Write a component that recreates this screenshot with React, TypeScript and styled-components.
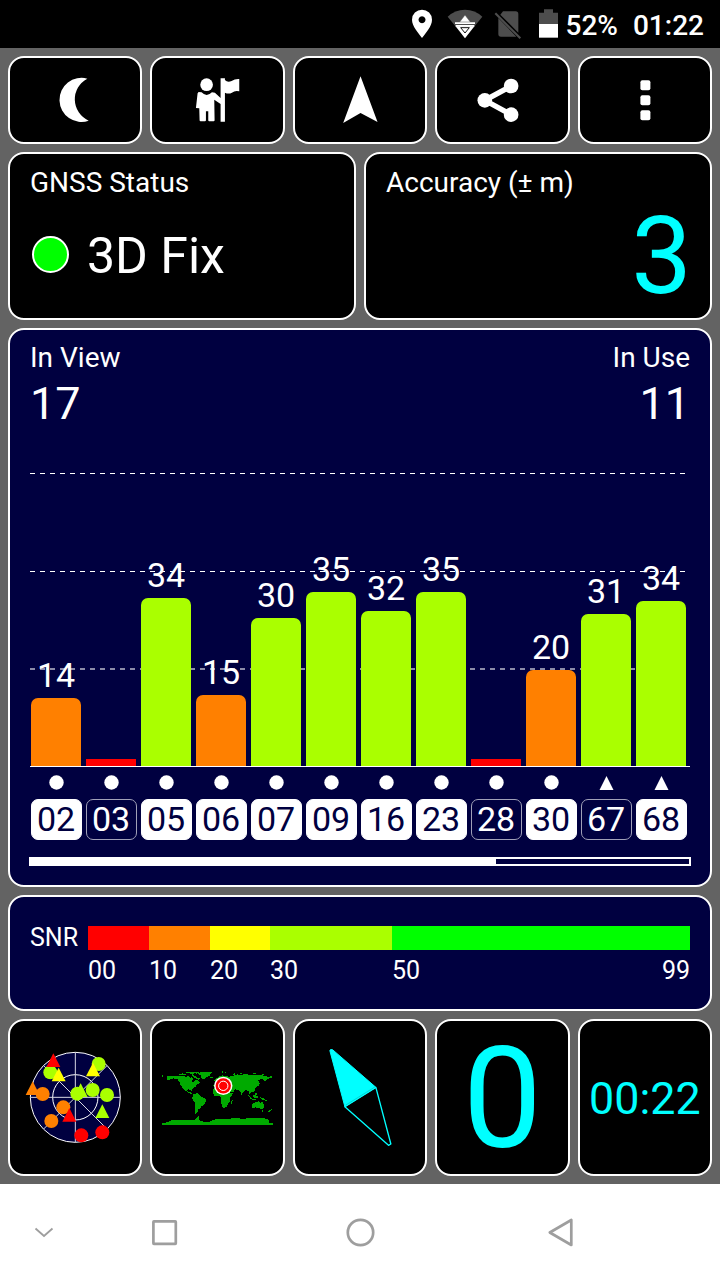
import React from 'react';
import styled, { createGlobalStyle } from 'styled-components';

const NAVY = '#000040';
const CYAN = '#00ffff';
const RED = '#ff0000';
const ORANGE = '#ff8000';
const YELLOW = '#ffff00';
const LIME = '#aaff00';
const GREEN = '#00ff00';

const GlobalStyle = createGlobalStyle`
  * { box-sizing: border-box; }
  body { margin: 0; background: #636363; }
`;

const Screen = styled.div`
  display: flex;
  flex-direction: column;
  width: 720px;
  height: 1280px;
  overflow: hidden;
  background: #636363;
  color: #fff;
  font-family: Roboto, 'Liberation Sans', sans-serif;
  svg { display: block; flex: none; }
`;

const StatusBar = styled.header`
  display: flex;
  justify-content: flex-end;
  align-items: center;
  height: 48px;
  padding-right: 16px;
  background: #000;
`;

const StatusText = styled.span<{ $gap?: number }>`
  margin-left: ${p => p.$gap ?? 0}px;
  padding-top: 3px;
  font-size: 28px;
  font-weight: 500;
  line-height: 48px;
  white-space: nowrap;
`;

const Main = styled.main`
  display: flex;
  flex-direction: column;
  gap: 8px;
  height: 1136px;
  padding: 8px;
`;

const Row = styled.div<{ $height: number }>`
  display: flex;
  gap: 8px;
  height: ${p => p.$height}px;
`;

const Card = styled.section<{ $navy?: boolean }>`
  flex: 1 1 0;
  min-width: 0;
  border: 2px solid #fff;
  border-radius: 16px;
  background: ${p => (p.$navy ? NAVY : '#000')};
`;

const Tile = styled.button`
  display: flex;
  flex: 1 1 0;
  min-width: 0;
  align-items: center;
  justify-content: center;
  padding: 0;
  border: 2px solid #fff;
  border-radius: 16px;
  background: #000;
`;

const TileValue = styled.span<{ $size: number; $drop: number }>`
  padding-top: ${p => p.$drop}px;
  color: ${CYAN};
  font-family: Roboto, 'Liberation Sans', sans-serif;
  font-size: ${p => p.$size}px;
  line-height: 150px;
`;

const FieldCard = styled(Card)`
  padding: 14px 20px 0;
`;

const Label = styled.div`
  font-size: 28px;
  line-height: 30px;
`;

const FixRow = styled.div`
  display: flex;
  align-items: center;
  height: 115px;
  gap: 18px;
  padding-left: 2px;
  font-size: 50px;
  line-height: 60px;
`;

const FixDot = styled.i`
  width: 37px;
  height: 37px;
  margin-top: -3px;
  border: 2px solid #fff;
  border-radius: 50%;
  background: ${GREEN};
`;

const BigValue = styled.div`
  margin-right: -2px;
  color: ${CYAN};
  font-size: 108px;
  line-height: 116px;
  text-align: right;
`;

const ChartCard = styled(Card)`
  flex: none;
  height: 559px;
  padding: 13px 20px 0;
`;

const Between = styled.div`
  display: flex;
  justify-content: space-between;
`;

const Count = styled.div`
  font-size: 45px;
  line-height: 61px;
`;

const Plot = styled.div`
  position: relative;
  display: flex;
  align-items: flex-end;
  gap: 5px;
  height: 333px;
  padding-left: 1px;
  border-bottom: 1px solid #fff;
`;

const GridLines = styled.svg`
  position: absolute;
  left: 0;
  top: 0;
`;

const BarColumn = styled.div`
  position: relative;
  width: 50px;
  text-align: center;
  font-size: 34px;
  line-height: 46px;
`;

const Bar = styled.div<{ $height: number; $color: string }>`
  height: ${p => p.$height}px;
  border-radius: ${p => (p.$height > 10 ? '7px 7px 0 0' : '0')};
  background: ${p => p.$color};
`;

const SatRow = styled.div`
  display: flex;
  gap: 4px;
  padding-left: 0.5px;
`;

const Satellite = styled.div`
  display: flex;
  flex: none;
  flex-direction: column;
  align-items: center;
  width: 51px;
  padding-top: 8px;
`;

const SatId = styled.div<{ $used: boolean }>`
  width: 51px;
  height: 41px;
  margin-top: 9.4px;
  border: 1px solid ${p => (p.$used ? '#fff' : '#a0a0b8')};
  border-radius: 7px;
  background: ${p => (p.$used ? '#fff' : NAVY)};
  color: ${p => (p.$used ? NAVY : '#fff')};
  font-size: 34px;
  line-height: 38px;
  text-align: center;
`;

const ScrollTrack = styled.div`
  height: 9px;
  margin: 16.6px -1px 0;
  border: 2px solid #fff;
`;

const ScrollThumb = styled.div`
  width: 465px;
  height: 5px;
  background: #fff;
`;

const ScaleCard = styled(Card)`
  display: flex;
  flex: none;
  height: 116px;
  padding: 29px 20px 0;
  font-size: 25px;
`;

const ScaleName = styled.div`
  width: 58px;
  line-height: 23px;
`;

const Scale = styled.div`
  display: flex;
  width: 602px;
`;

const ScaleStep = styled.div<{ $color: string; $width: number }>`
  display: flex;
  justify-content: space-between;
  width: ${p => p.$width}px;
  height: 66px;
  padding-top: 24px;
  line-height: 42px;
  background: linear-gradient(${p => p.$color}, ${p => p.$color}) no-repeat 0 0 / 100% 24px;
`;

const NavBar = styled.nav`
  display: flex;
  height: 96px;
  padding-left: 28px;
  background: #fff;
  align-items: center;
`;

const NavButton = styled.span<{ $gap?: number }>`
  margin-left: ${p => p.$gap ?? 0}px;
`;

type Sat = { id: string; snr?: number; height: number; used: boolean; triangle?: boolean };

const sats: Sat[] = [
  { id: '02', snr: 14, height: 68, used: true },
  { id: '03', height: 7, used: false },
  { id: '05', snr: 34, height: 168, used: true },
  { id: '06', snr: 15, height: 71, used: true },
  { id: '07', snr: 30, height: 148, used: true },
  { id: '09', snr: 35, height: 174, used: true },
  { id: '16', snr: 32, height: 155, used: true },
  { id: '23', snr: 35, height: 174, used: true },
  { id: '28', height: 7, used: false },
  { id: '30', snr: 20, height: 96, used: true },
  { id: '67', snr: 31, height: 152, used: false, triangle: true },
  { id: '68', snr: 34, height: 165, used: true, triangle: true },
];

const barColor = (snr?: number) => (snr === undefined ? RED : snr > 20 ? LIME : ORANGE);

const scale = [
  { color: RED, width: 61, label: '00' },
  { color: ORANGE, width: 61, label: '10' },
  { color: YELLOW, width: 60, label: '20' },
  { color: LIME, width: 122, label: '30' },
  { color: GREEN, width: 298, label: '50', end: '99' },
];

const skyCircles: [number, number, string][] = [
  [151, 172, LIME], [296, 147, LIME], [278, 225, LIME], [321, 240, LIME],
  [128, 237, ORANGE], [190, 277, ORANGE], [154, 318, ORANGE],
  [244, 361, RED], [307, 352, RED],
];

const skyTriangles: [number, number, string][] = [
  [160, 115, RED], [176, 158, YELLOW], [279, 143, YELLOW],
  [242, 205, LIME], [307, 268, LIME], [208, 279, RED],
];

const triangle = (x: number, y: number) => `M${x} ${y}l21 41h-42z`;

const StatusIcons = () => (
  <svg width="150" height="48" viewBox="0 0 450 144">
    <g transform="translate(-30 0)">
      <path fill="#fff" fillRule="evenodd" d="M66 114C54 98 36 78 36 59A30 30 0 0 1 96 59C96 78 78 98 66 114ZM66 49a10.500 10.500 0 1 0 .1 0z" />
      <path fill="#4d4d4d" d="M195 114L143 50Q165 29 195 29T247 50Z" />
      <path fill="#fff" d="M167 79L195 115L223 79Z" />
      <path fill="#fff" stroke="#4d4d4d" strokeWidth="1.500" d="M195 45L211 66H179Z" />
      <path fill="#fff" d="M165 67h60v5h-60zM167 75h56v5h-56z" />
      <path stroke="#111" strokeWidth="3" fill="#fff" d="M182 83H208L195 99Z" />
      <path stroke="#4d4d4d" strokeWidth="2.500" d="M173 73.500H218" />
      <path fill="#4d4d4d" d="M309 34H347Q355 34 355 42V98L301 44ZM295 54L349 110H303Q295 110 295 102Z" />
      <path stroke="#4d4d4d" strokeWidth="6.500" d="M286 40L361 115" />
      <path fill="#4d4d4d" d="M417 38H432V28H459V38H474V72H417Z" />
      <path fill="#fff" d="M417 72H474V113H417Z" />
    </g>
  </svg>
);

const toolbarIcons = [
  <path d="M262 92A66 66 0 1 0 266 218A70 70 0 0 1 262 92Z" />,
  <>
    <circle cx="621" cy="110" r="19" />
    <path d="M597 132L606 133Q621 149 637 133L646 134L663 150V91H676V96Q684 105 696 99Q706 92 719 93V130Q707 126 697 134Q687 139 676 134V221H663V168L644 155L645 217Q645 220 642 220H629Q626 220 626 217V190H619V217Q619 220 616 220H603Q600 220 600 217L599 181L589 180L594 136Z" />
  </>,
  <path d="M1081 85L1132 222L1081 195L1029 225Z" />,
  <>
    <circle cx="1455" cy="157" r="22" />
    <circle cx="1534" cy="114" r="22" />
    <circle cx="1534" cy="200" r="22" />
    <path fill="none" stroke="#fff" strokeWidth="16" d="M1534 114L1455 157L1534 200" />
  </>,
  <>
    <rect x="1920" y="97" width="30" height="30" rx="6" />
    <rect x="1920" y="142" width="30" height="30" rx="6" />
    <rect x="1920" y="187" width="30" height="30" rx="6" />
  </>,
];

const SkyPlot = () => (
  <svg width="130.4" height="153" viewBox="30 18 391.2 459">
    <circle cx="226" cy="247" r="135" fill={NAVY} stroke="#fff" strokeWidth="3" />
    <circle cx="226" cy="247" r="68" fill="none" stroke="#fff" strokeWidth="3" />
    <path d="M91 247H361M226 112V382M131 152L321 342M131 342L321 152" stroke="#d8d8e4" strokeWidth="3" />
    <path d={triangle(98, 199)} fill={ORANGE} />
    {skyCircles.map(([x, y, c]) => <circle key={`${x}-${y}`} cx={x} cy={y} r="21" fill={c} />)}
    {skyTriangles.map(([x, y, c]) => <path key={`${x}-${y}`} d={triangle(x, y)} fill={c} />)}
    <circle cx="232" cy="236" r="21" fill={LIME} />
  </svg>
);

const WorldMap = () => (
  <svg width="130.4" height="153" viewBox="7.200 -87 391.200 459">
    <g fill="#00aa00" shapeRendering="crispEdges">
      <path d="M36 76h4v6h-4zM51 80L57 77L90 79L97 76L108 80L118 79L122 84L127 81L130 87L126 94L132 97L138 89L145 92L151 98L143 103L138 110L131 114L127 119L127 124L123 119L116 118L112 122L116 126L122 126L124 130L131 132L128 134L119 130L107 122L99 113L92 105L90 96L84 88L72 85L61 89L54 92L52 86Z" />
      <path d="M88 74L98 70L110 73L104 76ZM103 68L118 67L113 71ZM117 66H150L140 71L133 69L129 74L121 70ZM127 75L138 78L144 83L151 86L146 90L137 84L130 81Z" />
      <path d="M145 69L157 66H187L183 71L180 78L168 83L161 89L156 85L154 77L149 73ZM181 80h9v4h-9z" />
      <path d="M131 132L143 131L152 137L158 142L170 148L169 154L163 164L157 168L152 174L146 179L143 189L138 192L135 188L136 175L137 160L130 151L128 143Z" />
      <path d="M124 125h12v2h-12zM139 128h6v3h-6z" />
      <path d="M192 91L202 84L211 78L220 76L228 79L240 80L254 76L264 73L272 76L286 71L296 74L322 76L337 76L356 80L368 79V83L358 85L351 89L345 95L343 89L333 87L326 92L329 98L323 105L320 112L315 115L318 122L311 127L303 126L302 133L298 129L297 123L289 120L283 124L276 133L271 124L264 119L256 118L253 125L244 128L240 120L231 115L218 112L208 108L199 110L193 112L191 105L198 103L202 96Z" />
      <path d="M194 114L210 111L222 116L237 119L243 128L250 129L245 138L240 146L240 157L235 162L231 171L224 174L219 173L215 161L215 149L212 138L205 138L195 137L189 129L190 120Z" />
      <path d="M244 153L249 150L248 162L243 165ZM275 132h3v4h-3zM319 106L326 104L329 98L332 100L327 107L320 112ZM216 64h5v4h-5zM225 65h5v3h-5zM248 75L254 70H258L253 77ZM271 69h7v3h-7zM309 70h10v3h-10zM336 73h6v2h-6z" />
      <path d="M294 133L304 141L307 147L302 146ZM306 148H319V151H306ZM310 137L318 133L319 142L313 145ZM320 137L326 141L322 147L319 142ZM319 126L323 130L321 134L317 130ZM331 142L344 145L349 151L339 150Z" />
      <path d="M307 163L314 159L320 155L329 154L334 159L337 154L340 158L344 167L343 173L336 178L326 174L318 172L310 175L307 171ZM336 181h5v4h-5zM363 176h4v4h-4zM359 181h5v3h-5zM356 184h4v2h-4zM345 149h6v3h-6z" />
      <path d="M36 225V219L48 218L59 214L64 211L90 209L108 211L125 209L134 211L142 204L147 198L150 201L146 207L153 212L163 215L174 217L181 214L191 209L208 207L238 208L247 205L263 204L278 207L292 205L307 203L324 205L340 205L351 206L360 210L356 217L369 219V225Z" />
    </g>
    <circle cx="221" cy="107.500" r="27.500" fill="#fff" />
    <circle cx="221" cy="107.500" r="23" fill={RED} />
    <circle cx="221" cy="107.500" r="14" fill={RED} stroke="#fff" strokeWidth="3" />
  </svg>
);

const Compass = () => (
  <svg width="130.4" height="153" viewBox="14.400 18 391.200 459">
    <path d="M119 107Q119 102 127 104L257 217L164 275Z" fill={CYAN} stroke={CYAN} strokeWidth="3" />
    <path d="M164 275L257 217L302 387L295 391Z" fill="none" stroke={CYAN} strokeWidth="4" strokeLinejoin="round" />
    <path d="M167 270L254 216" stroke="#007f80" strokeWidth="1" />
  </svg>
);

export default function App() {
  return (
    <Screen>
      <GlobalStyle />
      <StatusBar>
        <StatusIcons />
        <StatusText $gap={6}>52%</StatusText>
        <StatusText $gap={15}>01:22</StatusText>
      </StatusBar>

      <Main>
        <Row $height={88}>
          {toolbarIcons.map((icon, i) => (
            <Tile key={i}>
              <svg width="130.4" height="84" viewBox={`${30 + i * 427.2} 30 391.2 252`} fill="#fff">
                {icon}
              </svg>
            </Tile>
          ))}
        </Row>

        <Row $height={168}>
          <FieldCard>
            <Label>GNSS Status</Label>
            <FixRow><FixDot />3D Fix</FixRow>
          </FieldCard>
          <FieldCard>
            <Label>Accuracy (± m)</Label>
            <BigValue>3</BigValue>
          </FieldCard>
        </Row>

        <ChartCard $navy>
          <Between><Label>In View</Label><Label>In Use</Label></Between>
          <Between><Count>17</Count><Count>11</Count></Between>
          <Plot>
            <GridLines width="657" height="332">
              <g stroke="#fff" strokeDasharray="5 5">
                <path d="M0 39.500H656M0 137.500H656" />
                <path d="M0 235H656" strokeWidth="2" opacity="0.55" />
              </g>
            </GridLines>
            {sats.map(s => (
              <BarColumn key={s.id}>
                {s.snr}
                <Bar $height={s.height} $color={barColor(s.snr)} />
              </BarColumn>
            ))}
          </Plot>
          <SatRow>
            {sats.map(s => (
              <Satellite key={s.id}>
                <svg width="15" height="15" viewBox="0 0 15 15" fill="#fff">
                  {s.triangle ? <path d="M7.500 1L14.500 15H.5Z" /> : <circle cx="7.500" cy="7.500" r="7.200" />}
                </svg>
                <SatId $used={s.used}>{s.id}</SatId>
              </Satellite>
            ))}
          </SatRow>
          <ScrollTrack><ScrollThumb /></ScrollTrack>
        </ChartCard>

        <ScaleCard $navy>
          <ScaleName>SNR</ScaleName>
          <Scale>
            {scale.map(s => (
              <ScaleStep key={s.label} $color={s.color} $width={s.width}>
                <span>{s.label}</span>
                {s.end && <span>{s.end}</span>}
              </ScaleStep>
            ))}
          </Scale>
        </ScaleCard>

        <Row $height={157}>
          <Tile><SkyPlot /></Tile>
          <Tile><WorldMap /></Tile>
          <Tile><Compass /></Tile>
          <Tile><TileValue $size={141} $drop={2}>0</TileValue></Tile>
          <Tile><TileValue $size={44.8} $drop={2}>00:22</TileValue></Tile>
        </Row>
      </Main>

      <NavBar>
        <NavButton>
          <svg width="32" height="32" fill="none" stroke="#9e9e9e" strokeWidth="1.800"><path d="M7.500 12.500L16 20L24.500 12.500" /></svg>
        </NavButton>
        <NavButton $gap={88}>
          <svg width="32" height="32" fill="none" stroke="#9e9e9e" strokeWidth="2.700"><rect x="5.400" y="5.400" width="22.400" height="22.400" rx=".5" /></svg>
        </NavButton>
        <NavButton $gap={164}>
          <svg width="32" height="32" fill="none" stroke="#9e9e9e" strokeWidth="2.700"><circle cx="16.500" cy="16.500" r="12.700" /></svg>
        </NavButton>
        <NavButton $gap={168}>
          <svg width="32" height="32" fill="none" stroke="#9e9e9e" strokeWidth="2.700" strokeLinejoin="round"><path d="M5.800 16.500L27.300 4V29Z" /></svg>
        </NavButton>
      </NavBar>
    </Screen>
  );
}
